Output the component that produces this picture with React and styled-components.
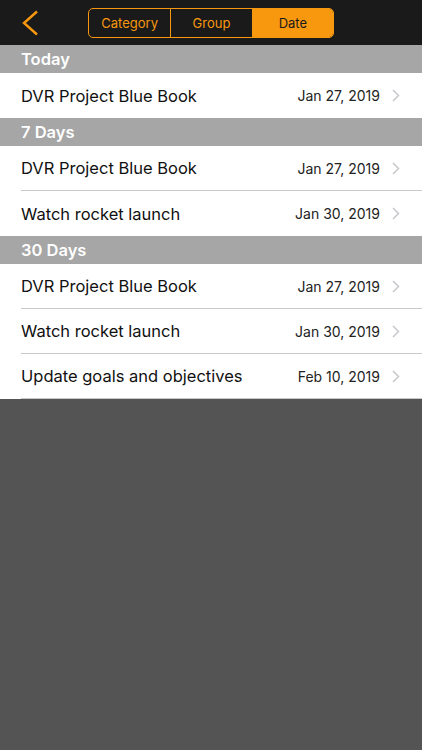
import React from "react";
import styled, { createGlobalStyle } from "styled-components";

const GlobalStyle = createGlobalStyle`
  html, body {
    margin: 0;
    padding: 0;
    background: #545454;
  }
  body {
    font-family: Inter, "Liberation Sans", Arial, sans-serif;
    -webkit-font-smoothing: antialiased;
  }
`;

const ORANGE = "#f7980f";

const Screen = styled.div`
  width: 422px;
  min-height: 750px;
  background: #545454;
`;

const NavBar = styled.header`
  height: 45px;
  background: #1b1a1a;
  display: flex;
  align-items: center;
`;

const BackButton = styled.button`
  width: 44px;
  height: 45px;
  padding: 0 0 0 20px;
  margin: 0;
  border: none;
  background: none;
  display: flex;
  align-items: center;
  cursor: pointer;
`;

const Segments = styled.div`
  margin-left: 44px;
  width: 246px;
  display: grid;
  grid-template-columns: repeat(3, 1fr);
  height: 30px;
  box-sizing: border-box;
  border: 1px solid ${ORANGE};
  border-radius: 5px;
  overflow: hidden;
`;

const Segment = styled.div`
  display: flex;
  align-items: center;
  justify-content: center;
  font-size: 13px;
  color: ${(p) => (p.$active ? "#1b1a1a" : ORANGE)};
  background: ${(p) => (p.$active ? ORANGE : "transparent")};
  border-left: ${(p) => (p.$first ? "none" : `1px solid ${ORANGE}`)};
`;

const List = styled.div`
  background: #fff;
`;

const SectionHeader = styled.div`
  height: 28px;
  background: #a6a6a6;
  color: #fff;
  font-size: 16.5px;
  font-weight: 600;
  display: flex;
  align-items: center;
  padding-left: 21px;
`;

const Row = styled.div`
  height: 45px;
  display: flex;
  align-items: center;
  padding-left: 21px;
  background: #fff;
`;

const RowInner = styled.div`
  flex: 1;
  height: 100%;
  display: flex;
  align-items: center;
  box-sizing: border-box;
  border-bottom: ${(p) => (p.$last ? "none" : "1px solid #c8c7cc")};
  padding-right: 22px;
`;

const Title = styled.span`
  flex: 1;
  font-size: 16.5px;
  color: #111;
`;

const DateText = styled.span`
  font-size: 14px;
  color: #222;
  margin-right: 12px;
`;

const Chevron = () => (
  <svg width="8" height="13" viewBox="0 0 8 13">
    <path d="M1 1l5.5 5.5L1 12" fill="none" stroke="#c7c7cc" strokeWidth="1.5" />
  </svg>
);

const sections = [
  { title: "Today", items: [["DVR Project Blue Book", "Jan 27, 2019"]] },
  {
    title: "7 Days",
    items: [
      ["DVR Project Blue Book", "Jan 27, 2019"],
      ["Watch rocket launch", "Jan 30, 2019"],
    ],
  },
  {
    title: "30 Days",
    items: [
      ["DVR Project Blue Book", "Jan 27, 2019"],
      ["Watch rocket launch", "Jan 30, 2019"],
      ["Update goals and objectives", "Feb 10, 2019"],
    ],
  },
];

export default function App() {
  return (
    <Screen>
      <GlobalStyle />
      <NavBar>
        <BackButton aria-label="Back">
          <svg width="20" height="26" viewBox="0 0 20 26">
            <path d="M17 1.5L4 13l13 11.5" fill="none" stroke={ORANGE} strokeWidth="2.4" />
          </svg>
        </BackButton>
        <Segments>
          <Segment $first>Category</Segment>
          <Segment>Group</Segment>
          <Segment $active>Date</Segment>
        </Segments>
      </NavBar>
      <List>
        {sections.map((s) => (
          <React.Fragment key={s.title}>
            <SectionHeader>{s.title}</SectionHeader>
            {s.items.map(([name, date], i) => (
              <Row key={name}>
                <RowInner $last={i === s.items.length - 1 && s.title !== "30 Days"}>
                  <Title>{name}</Title>
                  <DateText>{date}</DateText>
                  <Chevron />
                </RowInner>
              </Row>
            ))}
          </React.Fragment>
        ))}
      </List>
    </Screen>
  );
}
